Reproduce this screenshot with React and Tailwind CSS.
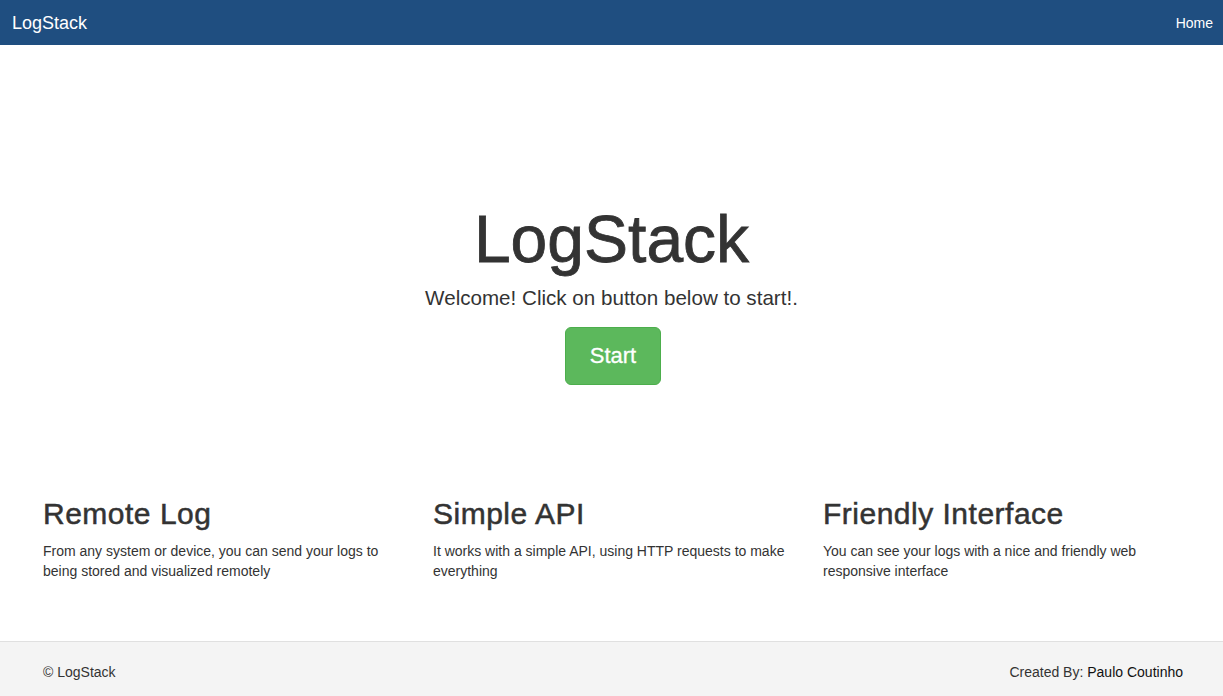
export default function App() {
  const features = [
    {
      title: "Remote Log",
      text: "From any system or device, you can send your logs to being stored and visualized remotely",
    },
    {
      title: "Simple API",
      text: "It works with a simple API, using HTTP requests to make everything",
    },
    {
      title: "Friendly Interface",
      text: "You can see your logs with a nice and friendly web responsive interface",
    },
  ];
  return (
    <div
      className="min-h-screen bg-white text-[#333]"
      style={{ fontFamily: '"Liberation Sans", Arial, sans-serif' }}
    >
      <nav className="h-[45px] bg-[#1f4e80] flex items-center justify-between pl-3 pr-[10px]">
        <span className="text-white text-[18px] leading-[20px]">LogStack</span>
        <span className="text-white text-[14px] leading-[20px]">Home</span>
      </nav>

      <section className="flex flex-col items-center pt-[158px]">
        <h1 className="text-[66px] leading-[73px] font-normal [-webkit-text-stroke:0.8px_#333]">LogStack</h1>
        <p className="mt-[7px] text-[20.6px] leading-[29px] font-light">
          Welcome! Click on button below to start!.
        </p>
        <button className="mt-[15px] ml-[3px] bg-[#5cb85c] border border-[#4cae4c] rounded-[6px] text-white text-[22px] leading-[28px] px-6 py-[14px] [-webkit-text-stroke:0.3px_#fff]">
          Start
        </button>
      </section>

      <section className="grid grid-cols-3 pl-[28px] pr-[25px] mt-[112px] pb-[60px]">
        {features.map((f) => (
          <div key={f.title} className="px-[15px]">
            <h2 className="text-[30px] leading-[33px] font-normal tracking-[0.5px] [-webkit-text-stroke:0.5px_#333]">{f.title}</h2>
            <p className="mt-[11px] text-[14px] leading-[20px]">{f.text}</p>
          </div>
        ))}
      </section>

      <footer className="bg-[#f4f4f4] border-t border-[#e0e0e0] py-5 pl-[43px] pr-[40px] flex justify-between text-[14px] leading-[20px]">
        <span>© LogStack</span>
        <span>
          Created By: <span className="text-[#111]">Paulo Coutinho</span>
        </span>
      </footer>
    </div>
  );
}
